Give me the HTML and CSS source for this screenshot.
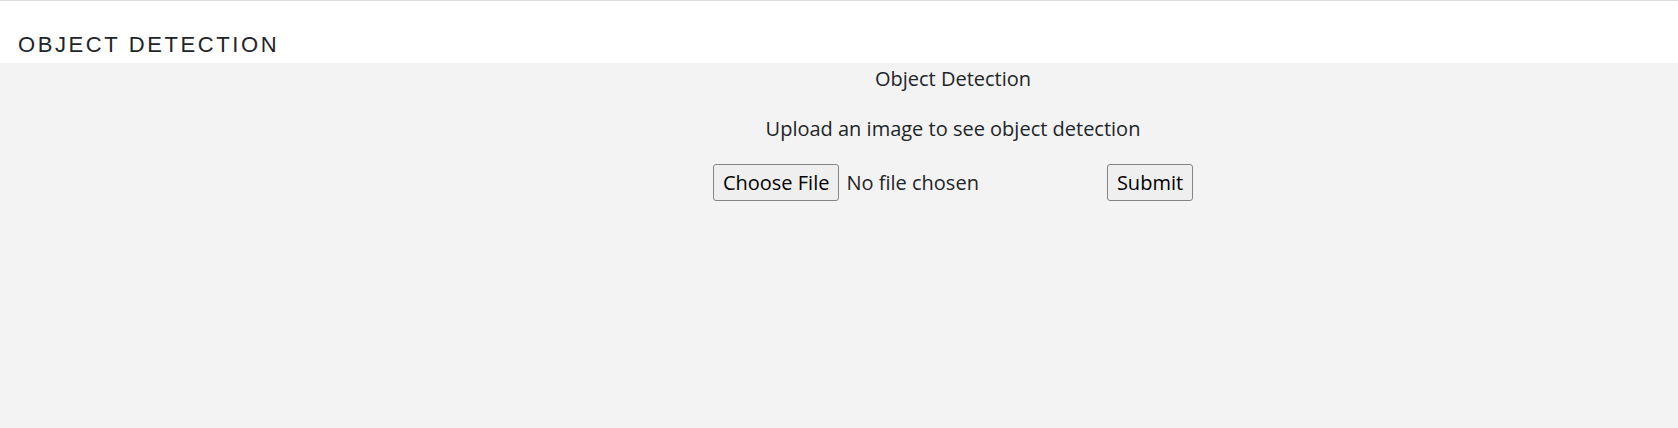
FILE: index.html
```html
<!DOCTYPE html>
<html lang="en">
<head>
<meta charset="utf-8">
<title>Object Detection</title>
<link rel="stylesheet" href="styles.css">
</head>
<body>
<header class="topbar">
  <div class="brand">OBJECT DETECTION</div>
</header>
<div class="layout">
  <aside class="side"></aside>
  <main class="content">
    <h1 class="title">Object Detection</h1>
    <p class="lead">Upload an image to see object detection</p>
    <form class="upload" onsubmit="return false;">
      <input class="file" type="file" name="image">
      <button class="submit" type="submit">Submit</button>
    </form>
  </main>
</div>
</body>
</html>
```
FILE: styles.css
```css
html, body {
  margin: 0;
  padding: 0;
}
body {
  background: #f3f3f3;
  font-family: "Open Sans", "Noto Sans", sans-serif;
  color: #212529;
  height: 428px;
}
.topbar {
  background: #ffffff;
  border-top: 1px solid #dcdcdc;
  height: 62px;
  display: flex;
  align-items: flex-end;
  box-sizing: content-box;
}
.brand {
  font-family: "Liberation Sans", Arial, sans-serif;
  font-size: 22px;
  letter-spacing: 2.6px;
  color: #212529;
  padding: 0 0 5px 18px;
  line-height: 26px;
}
.layout {
  display: flex;
}
.side {
  width: 228px;
  flex: none;
}
.content {
  flex: 1;
  display: flex;
  flex-direction: column;
  align-items: center;
}
.title {
  margin: 2px 0 0;
  font-size: 20px;
  font-weight: 400;
  line-height: 27px;
}
.lead {
  margin: 23px 0 0;
  font-size: 20px;
  line-height: 27px;
}
.upload {
  margin-top: 22px;
  display: flex;
  align-items: center;
}
.file {
  font-family: "Open Sans", "Noto Sans", sans-serif;
  font-size: 20px;
  line-height: 27px;
  color: #212529;
  width: 394px;
}
.file::file-selector-button {
  font-family: "Open Sans", "Noto Sans", sans-serif;
  font-size: 20px;
  line-height: 27px;
  color: #000;
  background: #efefef;
  border: 1px solid #858585;
  border-radius: 3px;
  padding: 4px 9px;
  margin-right: 7px;
}
.submit {
  font-family: "Open Sans", "Noto Sans", sans-serif;
  font-size: 20px;
  line-height: 27px;
  color: #000;
  background: #efefef;
  border: 1px solid #858585;
  border-radius: 3px;
  padding: 4px 9px;
}
```
